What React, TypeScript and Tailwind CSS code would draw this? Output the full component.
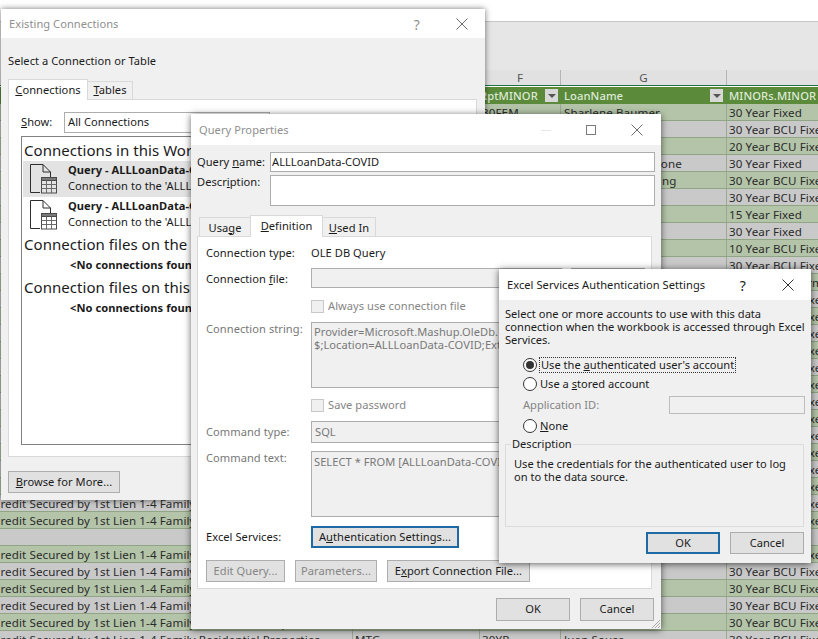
import type { ReactNode } from 'react';

const rowTerms: string[] = [
  '30 Year Fixed', '30 Year BCU Fixed', '20 Year BCU Fixed', '30 Year Fixed', '30 Year BCU Fixed',
  '30 Year BCU Fixed', '15 Year Fixed', '30 Year Fixed', '10 Year BCU Fixed', '30 Year BCU Fixed',
  '30 Year BCU Arm',
];

const names: Record<number, string> = { 0: 'Sharlene Baumer', 3: 'Michael Todd Malone', 4: 'Katherine Flemming', 31: 'Juan Sousa' };

function SheetRow({ k }: { k: number }) {
  const blank = k === 25;
  const term = blank ? '' : rowTerms[k] ?? '30 Year BCU Fixed';
  const band = k % 2 === 0 ? 'bg-[#b3c4a8]' : 'bg-[#c9c9c9]';
  return (
    <div className={`flex h-[17px] shrink-0 border-b border-[#8fa583] leading-[17px] ${band}`}>
      <div className="w-[353px] shrink-0 overflow-hidden whitespace-nowrap border-r border-[#9aa894] -indent-[7px]">
        {blank ? '' : 'Credit Secured by 1st Lien 1-4 Family Residential Properties'}
      </div>
      <div className="w-[127px] shrink-0 border-r border-[#9aa894] pl-[2px]">{blank ? '' : 'MTG'}</div>
      <div className="w-[81px] shrink-0 border-r border-[#9aa894] pl-[2px]">{k === 0 ? '30FEM' : blank ? '' : '30YR'}</div>
      <div className="w-[166px] shrink-0 border-r border-[#9aa894] pl-[3px]">{names[k] ?? ''}</div>
      <div className="flex-1 overflow-hidden whitespace-nowrap pl-[2px]">{term}</div>
    </div>
  );
}

function FilterBtn() {
  return (
    <span className="flex h-[13px] w-[13px] items-center justify-center bg-[#d8d8d8]">
      <span className="h-0 w-0 border-x-[4px] border-t-[4px] border-x-transparent border-t-[#555]" />
    </span>
  );
}

function Sheet() {
  const rows = Array.from({ length: 32 }, (_, k) => k);
  return (
    <div className="flex h-[639px] w-[818px] flex-col overflow-hidden bg-white text-[11.6px] tracking-[0.1px] text-[#2b2b2b]">
      <div className="h-[22px] shrink-0 border-b border-[#c6c6c6] bg-white" />
      <div className="h-[48px] shrink-0 bg-[#e6e6e6]" />
      <div className="flex h-[15px] shrink-0 bg-[#e1e1e1] text-center leading-[16px] text-[#555]">
        <div className="w-[480px]" />
        <div className="w-[81px] border-r border-[#b5b5b5]">F</div>
        <div className="w-[166px] border-r border-[#b5b5b5]">G</div>
        <div className="flex-1" />
      </div>
      <div className="h-[1px] shrink-0 bg-[#217346]" />
      <div className="h-[1px] shrink-0 bg-white" />
      <div className="flex h-[17px] shrink-0 bg-[#5a8a3a] text-[11.2px] font-medium leading-[17px] text-[#dfe9d8]">
        <div className="w-[480px]" />
        <div className="flex w-[81px] items-center justify-between pr-[3px]">
          <span>RptMINOR</span>
          <FilterBtn />
        </div>
        <div className="flex w-[166px] items-center justify-between pl-[3px] pr-[4px]">
          <span>LoanName</span>
          <FilterBtn />
        </div>
        <div className="flex-1 overflow-hidden whitespace-nowrap pl-[2px]">MINORs.MINOR</div>
      </div>
      {rows.map(k => <SheetRow key={k} k={k} />)}
    </div>
  );
}

function CloseGlyph({ color = '#6b6b6b' }: { color?: string }) {
  return (
    <svg width="12" height="12" viewBox="0 0 12 12" fill="none" stroke={color} strokeWidth="1">
      <path d="M0.5 0.5 L11.5 11.5 M11.5 0.5 L0.5 11.5" />
    </svg>
  );
}

function DocTableIcon() {
  return (
    <svg width="28" height="30" viewBox="0 0 28 30" fill="none" stroke="#2e2e2e" strokeWidth="1" className="shrink-0">
      <path d="M10 28.5 H0.5 V0.5 H13 L20.5 8 V13" />
      <path d="M13 0.5 V8 H20.5" />
      <rect x="11.5" y="13.5" width="15" height="15.5" stroke="#4a4a4a" />
      <rect x="11.5" y="13.5" width="15" height="3" fill="#7a7a7a" stroke="#4a4a4a" />
      <path d="M11.5 20.5 H26.5 M11.5 24.5 H26.5 M16.5 16.5 V29 M21.5 16.5 V29" stroke="#6a6a6a" />
    </svg>
  );
}

function QueryRow({ active }: { active?: boolean }) {
  return (
    <div className={`flex h-[36px] items-center gap-[10px] pl-[7px] ${active ? 'bg-[#e3e3e3]' : ''}`}>
      <DocTableIcon />
      <div className="-mt-[2px] whitespace-nowrap leading-[16px]">
        <div className="font-bold">Query - ALLLoanData-COVID</div>
        <div>Connection to the 'ALLLoanData-COVID' query in the workbook.</div>
      </div>
    </div>
  );
}

function Btn({ children, className = '', disabled, focus }: { children: ReactNode; className?: string; disabled?: boolean; focus?: boolean }) {
  const edge = focus ? 'border-2 border-[#1d6aa5]' : 'border border-[#adadad]';
  const tone = disabled ? 'text-[#858585]' : 'text-[#1a1a1a]';
  return (
    <button className={`flex h-[22px] shrink-0 items-center justify-center whitespace-nowrap bg-[#e1e1e1] ${edge} ${tone} ${className}`}>
      {children}
    </button>
  );
}

function ExistingConnections() {
  return (
    <div className="absolute left-[1px] top-[9px] flex h-[491px] w-[484px] flex-col overflow-hidden bg-[#f0f0f0] shadow-[0_0_6px_rgba(0,0,0,0.55)]">
      <div className="flex h-[29px] shrink-0 items-center justify-between bg-white pl-[8px] pr-[17px] pt-[1px] text-[#8f8f8f]">
        <span>Existing Connections</span>
        <div className="flex items-center gap-[36px]">
          <span className="text-[14px]">?</span>
          <CloseGlyph />
        </div>
      </div>
      <div className="flex flex-1 flex-col pl-[7px] pr-[8px]">
        <div className="mt-[15px] h-[16px] leading-[16px]">Select a Connection or Table</div>
        <div className="z-10 mt-[10px] flex h-[21px] items-end">
          <div className="flex h-[21px] w-[80px] items-center justify-center border border-b-0 border-[#d9d9d9] bg-white">
            <span><u>C</u>onnections</span>
          </div>
          <div className="flex h-[19px] w-[45px] items-center justify-center border border-b border-l-0 border-[#d9d9d9] bg-[#f0f0f0]">
            <span><u>T</u>ables</span>
          </div>
        </div>
        <div className="-mt-[1px] h-[358px] w-[469px] border border-[#d9d9d9] bg-white pl-[12px] pr-[10px] pt-[12px]">
          <div className="flex h-[20px] items-center">
            <span className="w-[43px]"><u>S</u>how:</span>
            <div className="flex h-[21px] w-[206px] items-center border border-[#adadad] bg-white pl-[3px]">All Connections</div>
          </div>
          <div className="mt-[4px] h-[309px] border border-[#828282] bg-white pl-[1px] pt-[4px]">
            <div className="h-[20px] pl-[1px] text-[15px] leading-[18px]">Connections in this Workbook</div>
            <QueryRow active />
            <QueryRow />
            <div className="mt-[1px] h-[21px] pl-[1px] text-[15px] leading-[20px]">Connection files on the Network</div>
            <div className="h-[22px] pl-[47px] font-bold leading-[20px]">&lt;No connections found&gt;</div>
            <div className="h-[21px] pl-[1px] text-[15px] leading-[20px]">Connection files on this computer</div>
            <div className="h-[22px] pl-[47px] font-bold leading-[20px]">&lt;No connections found&gt;</div>
          </div>
        </div>
        <Btn className="mt-[14px] w-[112px]"><span><u>B</u>rowse for More...</span></Btn>
      </div>
    </div>
  );
}

function FieldRow({ label, disabled, className, children }: { label: ReactNode; disabled?: boolean; className: string; children: ReactNode }) {
  return (
    <div className={`flex shrink-0 ${className}`}>
      <span className={`w-[105px] shrink-0 ${disabled ? 'text-[#787878]' : ''}`}>{label}</span>
      {children}
    </div>
  );
}

function GrayCheck({ label, className }: { label: string; className: string }) {
  return (
    <div className={`flex h-[14px] items-center gap-[4px] pl-[105px] text-[#858585] ${className}`}>
      <span className="h-[13px] w-[13px] border border-[#c8c8c8] bg-[#f0f0f0]" />
      <span>{label}</span>
    </div>
  );
}

function QueryProperties() {
  return (
    <div className="absolute left-[191px] top-[114px] flex h-[515px] w-[470px] flex-col bg-[#f0f0f0] shadow-[0_1px_7px_rgba(0,0,0,0.6)]">
      <div className="flex h-[31px] shrink-0 items-center justify-between bg-white pl-[8px] pr-[18px] pt-[1px] text-[#8f8f8f]">
        <span>Query Properties</span>
        <div className="flex items-center gap-[35px]">
          <span className="h-[1px] w-[10px] bg-[#e6e6e6]" />
          <span className="h-[10px] w-[10px] border border-[#7a7a7a]" />
          <CloseGlyph />
        </div>
      </div>
      <div className="relative flex flex-1 flex-col px-[6px] pt-[7px]">
        <div className="flex h-[20px] items-center">
          <span className="w-[73px] whitespace-nowrap">Query <u>n</u>ame:</span>
          <div className="flex h-[20px] flex-1 items-center border border-[#adadad] bg-white pl-[1px]">ALLLoanData-COVID</div>
        </div>
        <div className="mt-[3px] flex h-[31px]">
          <span className="w-[73px] leading-[14px]">Descr<u>i</u>ption:</span>
          <div className="flex-1 border border-[#adadad] bg-white" />
        </div>
        <div className="z-10 ml-[2px] mt-[9px] flex h-[22px] items-end">
          <div className="flex h-[20px] w-[51px] items-center justify-center border border-b-0 border-r-0 border-[#d9d9d9] pt-[1px]">
            <span>Usa<u>g</u>e</span>
          </div>
          <div className="flex h-[22px] w-[73px] items-center justify-center border border-b-0 border-[#d9d9d9] bg-white">
            <span><u>D</u>efinition</span>
          </div>
          <div className="flex h-[20px] w-[53px] items-center justify-center border border-b-0 border-l-0 border-[#d9d9d9] pt-[1px]">
            <span><u>U</u>sed In</span>
          </div>
        </div>
        <div className="-mt-[1px] flex h-[353px] w-[455px] flex-col border border-[#d9d9d9] bg-white pl-[8px] pt-[6px]">
          <FieldRow label="Connection type:" className="h-[20px] items-center">
            <span>OLE DB Query</span>
          </FieldRow>
          <FieldRow label={<>Connection <u>f</u>ile:</>} className="mt-[5px] h-[20px] items-start leading-[22px]">
            <div className="h-[20px] w-[251px] border border-[#adadad] bg-[#f0f0f0]" />
            <Btn disabled className="ml-[9px] h-[20px] w-[74px]">Browse...</Btn>
          </FieldRow>
          <GrayCheck label="Always use connection file" className="mt-[11px]" />
          <FieldRow label="Connection string:" disabled className="mt-[9px] h-[66px] leading-[14px]">
            <div className="h-[66px] w-[334px] overflow-hidden whitespace-nowrap border border-[#adadad] bg-[#f0f0f0] pl-[2px] pt-[2px] leading-[13px] text-[#787878]">
              <div>Provider=Microsoft.Mashup.OleDb.1;Data Source=</div>
              <div>$;Location=ALLLoanData-COVID;Extended Properties=</div>
            </div>
          </FieldRow>
          <GrayCheck label="Save password" className="mt-[10px]" />
          <FieldRow label="Command type:" disabled className="mt-[9px] h-[22px] items-center">
            <div className="flex h-[22px] w-[334px] items-center border border-[#adadad] bg-[#f0f0f0] pl-[3px] text-[#787878]">SQL</div>
          </FieldRow>
          <FieldRow label="Command text:" disabled className="mt-[8px] h-[66px] leading-[14px]">
            <div className="h-[66px] w-[334px] border border-[#adadad] bg-[#f0f0f0] pl-[2px] pt-[3px] text-[#787878]">SELECT * FROM [ALLLoanData-COVID]</div>
          </FieldRow>
          <FieldRow label="Excel Services:" className="mt-[9px] h-[22px] items-center">
            <Btn focus className="w-[148px]"><span>A<u>u</u>thentication Settings...</span></Btn>
          </FieldRow>
          <div className="mt-[12px] flex gap-[10px]">
            <Btn disabled className="w-[79px]">Edit Query...</Btn>
            <Btn disabled className="w-[82px]">Parameters...</Btn>
            <Btn className="w-[143px]"><span>E<u>x</u>port Connection File...</span></Btn>
          </div>
        </div>
        <div className="mt-[9px] flex justify-end gap-[10px] pr-[1px]">
          <Btn className="h-[23px] w-[74px]">OK</Btn>
          <Btn className="h-[23px] w-[74px]">Cancel</Btn>
        </div>
        <svg width="8" height="8" viewBox="0 0 8 8" stroke="#a8a8a8" className="absolute bottom-[1px] right-[1px]">
          <path d="M0 8 L8 0 M3 8 L8 3 M6 8 L8 6" />
        </svg>
      </div>
    </div>
  );
}

function Radio({ on }: { on?: boolean }) {
  return (
    <span className="flex h-[14px] w-[14px] shrink-0 items-center justify-center rounded-full border border-[#333] bg-white">
      {on && <span className="h-[8px] w-[8px] rounded-full bg-[#333]" />}
    </span>
  );
}

function AuthSettings() {
  return (
    <div className="absolute left-[499px] top-[269px] z-20 flex h-[294px] w-[312px] flex-col bg-[#f0f0f0] shadow-[0_1px_7px_rgba(0,0,0,0.65)]">
      <div className="flex h-[31px] shrink-0 items-center justify-between bg-white pl-[8px] pr-[17px] pt-[1px]">
        <span>Excel Services Authentication Settings</span>
        <div className="flex items-center gap-[36px]">
          <span className="text-[14px]">?</span>
          <CloseGlyph color="#333333" />
        </div>
      </div>
      <div className="flex flex-1 flex-col px-[6px] pt-[7px] tracking-normal">
        <p className="whitespace-nowrap leading-[13px]">
          Select one or more accounts to use with this data<br />
          connection when the workbook is accessed through Excel<br />
          Services.
        </p>
        <div className="ml-[18px] mt-[11px] flex h-[16px] items-center gap-[2px]">
          <Radio on />
          <span className="border border-dotted border-[#333] pl-[1px] pr-[1px] leading-[14px]">Use the <u>a</u>uthenticated user's account</span>
        </div>
        <div className="ml-[18px] mt-[3px] flex h-[16px] items-center gap-[3px]">
          <Radio />
          <span>Use a <u>s</u>tored account</span>
        </div>
        <div className="ml-[18px] mt-[4px] flex h-[18px] items-center justify-between">
          <span className="text-[#858585]">Application ID:</span>
          <div className="h-[18px] w-[136px] border border-[#bdbdbd] bg-[#f0f0f0]" />
        </div>
        <div className="ml-[18px] mt-[4px] flex h-[16px] items-center gap-[3px]">
          <Radio />
          <span><u>N</u>one</span>
        </div>
        <fieldset className="mt-[3px] h-[90px] w-[299px] border border-[#dcdcdc] pl-[8px] pr-[8px] leading-[13px]">
          <legend className="-ml-[3px] pl-[1px] pr-[1px] leading-[14px]">Description</legend>
          <p className="mt-[6px]">Use the credentials for the authenticated user to log on to the data source.</p>
        </fieldset>
        <div className="mt-[5px] flex justify-end gap-[10px] pr-[1px]">
          <Btn focus className="w-[74px]">OK</Btn>
          <Btn className="w-[74px]">Cancel</Btn>
        </div>
      </div>
    </div>
  );
}

export default function App() {
  return (
    <div className="relative h-[639px] w-[818px] overflow-hidden font-['Noto_Sans','Open_Sans',sans-serif] text-[11.1px] tracking-[0.05px] text-[#1a1a1a]">
      <Sheet />
      <ExistingConnections />
      <QueryProperties />
      <AuthSettings />
    </div>
  );
}
